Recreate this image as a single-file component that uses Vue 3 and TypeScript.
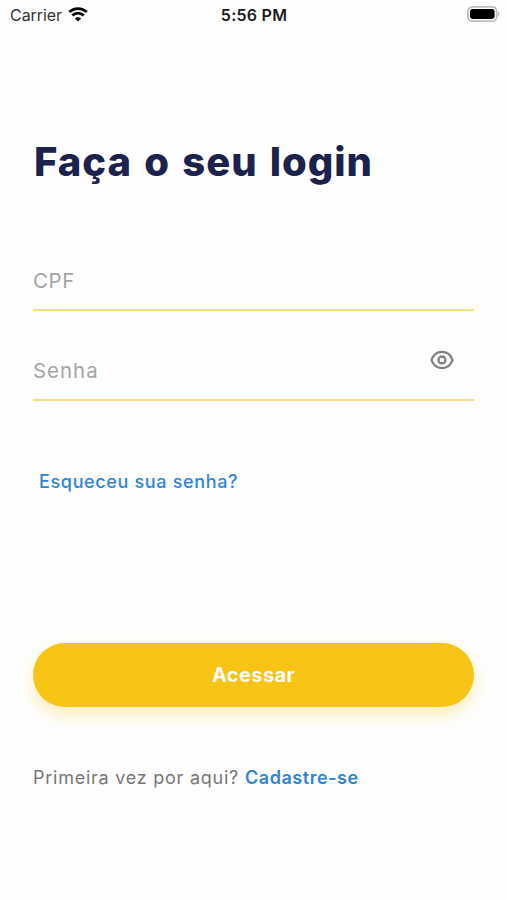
<script setup lang="ts">
import { ref } from 'vue'

const cpf = ref('')
const password = ref('')
const showPassword = ref(false)
</script>

<template>
  <main class="screen">
    <header class="status">
      <div class="carrier">
        <span class="carrier-name">Carrier</span>
        <svg class="wifi" viewBox="0 0 20 15" aria-hidden="true">
          <path d="M1.200 5.100C6.200.4 13.800.4 18.800 5.100" />
          <path d="M4.300 8.400c3.300-3 8.100-3 11.400 0" />
          <path class="dot" d="M10 14.600l-3.100-3.200c1.800-1.600 4.400-1.600 6.200 0z" />
        </svg>
      </div>
      <span class="time">5:56 PM</span>
      <div class="power">
        <svg class="battery" viewBox="0 0 33 16" aria-hidden="true">
          <rect x=".9" y=".9" width="28.8" height="14.2" rx="4.6" fill="#fff" stroke="#bdbdbd" stroke-width="1.8" />
          <rect x="3" y="3" width="24.6" height="10" rx="2.4" fill="#000" />
          <path d="M31 5.500c2 .7 2 4.300 0 5z" fill="#bdbdbd" />
        </svg>
      </div>
    </header>

    <form class="content" @submit.prevent>
      <h1 class="title">Faça o seu login</h1>

      <label class="field">
        <input v-model="cpf" class="input cpf" type="text" placeholder="CPF" />
      </label>
      <label class="field">
        <input v-model="password" class="input senha" :type="showPassword ? 'text' : 'password'" placeholder="Senha" />
        <button class="toggle" type="button" @click="showPassword = !showPassword">
          <svg class="eye" viewBox="0 0 24 20" aria-hidden="true">
            <path d="M1.500 10C3.300 4.700 7.300 1.900 12 1.900S20.700 4.700 22.500 10C20.700 15.300 16.700 18.100 12 18.100S3.300 15.300 1.500 10z" />
            <circle cx="12" cy="10" r="3.500" />
          </svg>
        </button>
      </label>

      <a class="forgot" href="#">Esqueceu sua senha?</a>
      <button class="submit" type="submit">Acessar</button>
      <p class="signup"><span class="question">Primeira vez por aqui?</span><a class="register" href="#">Cadastre-se</a></p>
    </form>
  </main>
</template>

<style>
body {
  background: #fefefe;
}
</style>

<style scoped>
.screen {
  box-sizing: border-box;
  width: 100%;
  height: 900px;
  overflow: hidden;
  background: #fefefe;
  font-family: Inter, "Open Sans", sans-serif;
}
.status {
  display: grid;
  grid-template-columns: 1fr auto 1fr;
  align-items: center;
  height: 30px;
  padding: 0 7px 0 10px;
  color: #1c1c1c;
}
.carrier {
  display: flex;
  align-items: center;
  gap: 6px;
}
.carrier-name {
  font-size: 16px;
  letter-spacing: -0.05px;
  color: #333;
}
.wifi {
  width: 20px;
  height: 15px;
  margin-top: -1px;
  fill: none;
  stroke: #000;
  stroke-width: 2.8;
}
.wifi .dot {
  fill: #000;
  stroke: none;
}
.time {
  margin-right: 2px;
  font-size: 16px;
  font-weight: 600;
  letter-spacing: 0.25px;
}
.power {
  display: flex;
  justify-content: flex-end;
}
.battery {
  width: 33px;
  height: 16px;
  margin-top: -2px;
}
.content {
  display: flex;
  flex-direction: column;
  padding: 102px 33px 0;
}
.title {
  margin: 0 0 58px;
  padding-left: 1px;
  font-size: 40px;
  line-height: 60px;
  font-weight: 800;
  letter-spacing: 0.95px;
  word-spacing: 2.6px;
  white-space: nowrap;
  color: #1b224b;
}
.field {
  display: flex;
  box-sizing: border-box;
  height: 61px;
  margin-bottom: 29px;
  border-bottom: 2px solid #f8dc82;
}
.input {
  flex: 1;
  min-width: 0;
  padding: 2px 0 0;
  border: 0;
  outline: 0;
  background: transparent;
  color: #1b224b;
  font-family: inherit;
  font-size: 20.5px;
  letter-spacing: 0.6px;
}
.senha {
  letter-spacing: 0.95px;
}
.input::placeholder {
  color: #a5a5a5;
}
.toggle {
  display: flex;
  align-self: flex-start;
  margin: 10px 20px 0 0;
  padding: 0;
  border: 0;
  background: none;
}
.eye {
  width: 24px;
  height: 20px;
  fill: none;
  stroke: #808080;
  stroke-width: 2.3;
}
.forgot {
  align-self: flex-start;
  margin: 39px 0 0 6px;
  font-size: 18px;
  line-height: 26px;
  font-weight: 500;
  letter-spacing: 0.65px;
  color: #2e84d5;
  text-decoration: none;
}
.submit {
  height: 64px;
  margin-top: 148px;
  padding: 0;
  border: 0;
  border-radius: 32px;
  background: #f7c315;
  box-shadow: 0 7px 16px rgba(247, 195, 21, 0.32);
  font-family: inherit;
  font-size: 20px;
  font-weight: 700;
  letter-spacing: 0.4px;
  color: #fff;
}
.signup {
  display: flex;
  gap: 6px;
  margin: 58px 0 0;
  font-size: 18px;
  line-height: 26px;
  white-space: nowrap;
}
.question {
  color: #777;
  letter-spacing: 0.75px;
}
.register {
  color: #2e84d5;
  font-weight: 600;
  letter-spacing: 0.55px;
  text-decoration: none;
}
</style>
